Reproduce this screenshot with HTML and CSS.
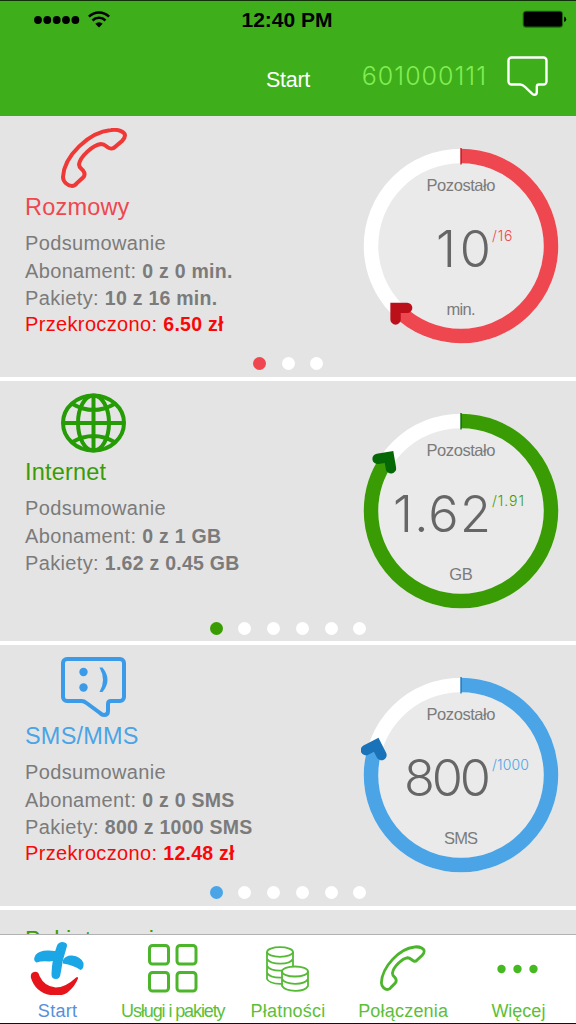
FILE: index.html
```html
<!DOCTYPE html>
<html lang="pl">

<head>
  <meta charset="UTF-8">
  <meta name="viewport" content="width=device-width, initial-scale=1.0">
  <title>Start</title>
  <link rel="stylesheet" href="styles.css">
</head>

<body>
  <header class="header">
    <div class="status-bar">
      <div class="signal">
        <svg width="46" height="8" viewBox="0 0 46 8">
          <circle cx="4" cy="4" r="3.9" /><circle cx="13.3" cy="4" r="3.9" /><circle cx="22.7" cy="4" r="3.9" /><circle cx="32" cy="4" r="3.9" /><circle cx="41.4" cy="4" r="3.9" />
        </svg>
        <svg width="22" height="17" viewBox="0 0 22 17">
          <path d="M0.9 5.6a14.3 14.3 0 0 1 20.2 0M4.5 9.5a9.2 9.2 0 0 1 13 0" fill="none" stroke="#000" stroke-width="2.5" />
          <path d="M11 16.5l-3.7-3.8a5.3 5.3 0 0 1 7.4 0z" />
        </svg>
      </div>
      <div class="clock">12:40 PM</div>
      <div class="battery">
        <svg width="45" height="19" viewBox="0 0 45 19">
          <rect x="0.7" y="0.7" width="40.4" height="17" rx="3.5" fill="#1f6a0c" />
          <rect x="1.8" y="1.8" width="38.2" height="14.8" rx="2" />
          <path d="M42.2 6.5q2 .6 2 2.7t-2 2.7z" />
        </svg>
      </div>
    </div>
    <div class="nav-bar">
      <div class="nav-title">Start</div>
      <div class="nav-right">
        <span class="phone-number">601000111</span>
        <svg width="42" height="42" viewBox="0 0 42 42">
          <path d="M4.5 2.500h32a3 3 0 0 1 3 3v21a3 3 0 0 1-3 3h-4.5q-2.2 0-2.2 2.2v5.3q0 2.8-2.3 2.8-1 0-2.2-1l-7.3-6.900q-2.500-2.400-4.800-2.400h-8.700a3 3 0 0 1-3-3v-21a3 3 0 0 1 3-3z" fill="none" stroke="#fff" stroke-width="2.4" />
        </svg>
      </div>
    </div>
  </header>

  <main class="cards">
    <section class="card red">
      <div class="card-main">
        <div class="info">
          <svg class="card-icon" width="66" height="60" viewBox="0 0 66 60">
            <path d="M50 2C28 4 3 28 2 49c0 5 5 9 9 9 2 0 3.500-1 5-3l6-5.500c2.500-2.500 2-4.500 0-7-2-2-4-3-4-6 1-8 14-19.500 22-20.500 3 0 5 2 7 3.500 2 1.500 5 1.500 7-.500l7-6c2-2 3-3.500 3-5.500C64 4 58 1 50 2z" fill="none" stroke="#f03837" stroke-width="4" />
          </svg>
          <h2>Rozmowy</h2>
          <p class="summary">Podsumowanie</p>
          <p>Abonament: <b>0 z 0 min.</b></p>
          <p>Pakiety: <b>10 z 16 min.</b></p>
          <p class="over">Przekroczono: <b>6.50 zł</b></p>
        </div>
        <svg class="gauge" width="200" height="200" viewBox="0 0 200 200">
          <circle class="track" cx="100" cy="100" r="90" />
          <circle class="value" cx="100" cy="100" r="90" pathLength="100" stroke-dasharray="62.5 100" transform="rotate(-90 100 100)" />
          <path class="tick" d="M100 2v16.500" />
          <path class="arrow" transform="rotate(225 100 100) translate(100 10) rotate(-225)" d="M-7-7h16.800a5.200 5.200 0 0 1 0 10.400h-6.400v6.400a5.200 5.200 0 0 1-10.400 0z" />
          <text class="label" x="100" y="45" textLength="69">Pozostało</text>
          <text class="amount" x="130" y="120.700" textLength="55">10</text>
          <text class="total" x="131" y="95" textLength="20.500">/16</text>
          <text class="label" x="100" y="168.700" textLength="29">min.</text>
        </svg>
      </div>
      <div class="dots"><i class="active"></i><i></i><i></i></div>
    </section>

    <section class="card green">
      <div class="card-main">
        <div class="info">
          <svg class="card-icon" width="66" height="60" viewBox="0 0 66 60">
            <g fill="none" stroke="#259b06" stroke-width="4">
              <ellipse cx="32.500" cy="30" rx="30.500" ry="27.500" />
              <ellipse cx="32.500" cy="30" rx="15.500" ry="27.500" />
              <path d="M32.500 2v56M2 30h61M11.500 11q21 12 42 0M11.500 49q21-12 42 0" />
            </g>
          </svg>
          <h2>Internet</h2>
          <p class="summary">Podsumowanie</p>
          <p>Abonament: <b>0 z 1 GB</b></p>
          <p>Pakiety: <b>1.62 z 0.45 GB</b></p>
        </div>
        <svg class="gauge" width="200" height="200" viewBox="0 0 200 200">
          <circle class="track" cx="100" cy="100" r="90" />
          <circle class="value" cx="100" cy="100" r="90" pathLength="100" stroke-dasharray="84.800 100" transform="rotate(-90 100 100)" />
          <path class="tick" d="M100 2v16.500" />
          <path class="arrow" transform="rotate(305.300 100 100) translate(100 10) rotate(-225)" d="M-7-7h16.800a5.200 5.200 0 0 1 0 10.400h-6.400v6.400a5.200 5.200 0 0 1-10.400 0z" />
          <text class="label" x="100" y="45" textLength="69">Pozostało</text>
          <text class="amount" x="130" y="120.700" textLength="98">1.62</text>
          <text class="total" x="131" y="95" textLength="32">/1.91</text>
          <text class="label" x="100" y="168.700" textLength="23.500">GB</text>
        </svg>
      </div>
      <div class="dots"><i class="active"></i><i></i><i></i><i></i><i></i><i></i></div>
    </section>

    <section class="card blue">
      <div class="card-main">
        <div class="info">
          <svg class="card-icon" width="66" height="60" viewBox="0 0 66 60">
            <path d="M6 2h53a4 4 0 0 1 4 4v34a4 4 0 0 1-4 4h-9q-3 0-3 3v7q0 4-4 4-2 0-4-2L25.500 46q-2.500-2-5-2H6a4 4 0 0 1-4-4V6a4 4 0 0 1 4-4z" fill="none" stroke="#3b9be8" stroke-width="4" />
            <circle cx="22.500" cy="15" r="4.200" fill="#3b9be8" />
            <circle cx="22.500" cy="30.500" r="4.200" fill="#3b9be8" />
            <path d="M38.500 10.500h3q10 12.500 0 24.500h-3q7-12 0-24.500z" fill="#3b9be8" />
          </svg>
          <h2>SMS/MMS</h2>
          <p class="summary">Podsumowanie</p>
          <p>Abonament: <b>0 z 0 SMS</b></p>
          <p>Pakiety: <b>800 z 1000 SMS</b></p>
          <p class="over">Przekroczono: <b>12.48 zł</b></p>
        </div>
        <svg class="gauge" width="200" height="200" viewBox="0 0 200 200">
          <circle class="track" cx="100" cy="100" r="90" />
          <circle class="value" cx="100" cy="100" r="90" pathLength="100" stroke-dasharray="80 100" transform="rotate(-90 100 100)" />
          <path class="tick" d="M100 2v16.500" />
          <path class="arrow" transform="rotate(288 100 100) translate(100 10) rotate(-225)" d="M-7-7h16.800a5.200 5.200 0 0 1 0 10.400h-6.400v6.400a5.200 5.200 0 0 1-10.400 0z" />
          <text class="label" x="100" y="45" textLength="69">Pozostało</text>
          <text class="amount" x="130" y="120.700" textLength="87">800</text>
          <text class="total" x="131" y="95" textLength="37">/1000</text>
          <text class="label" x="100" y="168.700" textLength="34">SMS</text>
        </svg>
      </div>
      <div class="dots"><i class="active"></i><i></i><i></i><i></i><i></i><i></i></div>
    </section>

    <section class="card next">
      <h2>Pakiety cenie</h2>
    </section>
  </main>

  <nav class="tab-bar">
    <a class="tab current">
      <svg width="60" height="60" viewBox="0 0 60 60">
        <path d="M29 10.500Q30.500 7 34.500 7q5 .500 4.500 4-4.500 13-6.500 28-.500 5-4.500 5-4.500 0-4.500-4.500 0-14 5.500-29z" fill="#1ba7e5" />
        <path d="M7.500 20q4-5 13.500-4.500l11 1-1.500 8.500-9 1.500q-7-1-13 1-4-2-1-7.500z" fill="#1ba7e5" />
        <path d="M35 25q3-5 9-4.500 9 1 11.500 7.500.500 6-3 7-7-5-17.500-6.500z" fill="#1ba7e5" />
        <path d="M3.500 38.500q2-2.500 5.500-1.500 2 1 2.500 4 5 10.500 16 11.500 10 0 20-9.500 2.500-2 2.500.500-3 8-10.500 14-4.500 3.500-13.500 3Q8 59 3 43q-.500-3 .500-4.500z" fill="#e5151b" />
      </svg>
      <span>Start</span>
    </a>
    <a class="tab packages">
      <svg width="60" height="60" viewBox="0 0 60 60">
        <g fill="none" stroke="#4cb52c" stroke-width="3">
          <rect x="6.500" y="10.500" width="19" height="18.500" rx="3" />
          <rect x="34" y="10.500" width="19" height="18.500" rx="3" />
          <rect x="6.500" y="37.500" width="19" height="18.500" rx="3" />
          <rect x="34" y="37.500" width="19" height="18.500" rx="3" />
        </g>
      </svg>
      <span>Usługi i pakiety</span>
    </a>
    <a class="tab payments">
      <svg width="60" height="60" viewBox="-1 -1 60 60">
        <g transform="translate(-2 0)" fill="none" stroke="#55b936" stroke-width="1.800">
          <ellipse cx="23" cy="16" rx="13" ry="4.800" />
          <path d="M10 16v27q2 4.500 13 4.800h3M36 16v14.500M10 23q3 4.500 13 4.700T36 23M10 30q3 4.500 13 4.700h3M10 37q3 4.500 13 4.700h2.500" />
          <ellipse cx="38" cy="35.500" rx="13" ry="5" />
          <path d="M25 35.500V50q3 4.500 13 4.800T51 50V35.500M25 43q3 4.700 13 4.800T51 43" />
        </g>
      </svg>
      <span>Płatności</span>
    </a>
    <a class="tab calls">
      <svg width="60" height="60" viewBox="0 0 60 60">
        <path transform="translate(7 10.500) scale(.69 .76)" d="M50 2C28 4 3 28 2 49c0 5 5 9 9 9 2 0 3.500-1 5-3l6-5.500c2.500-2.500 2-4.500 0-7-2-2-4-3-4-6 1-8 14-19.500 22-20.500 3 0 5 2 7 3.500 2 1.500 5 1.500 7-.500l7-6c2-2 3-3.500 3-5.500C64 4 58 1 50 2z" fill="none" stroke="#4cb52c" stroke-width="4" />
      </svg>
      <span>Połączenia</span>
    </a>
    <a class="tab more">
      <svg width="60" height="60" viewBox="0 0 60 60">
        <g fill="#45ba20">
          <circle cx="13.500" cy="34" r="4.200" /><circle cx="29.500" cy="34" r="4.200" /><circle cx="45.500" cy="34" r="4.200" />
        </g>
      </svg>
      <span>Więcej</span>
    </a>
  </nav>
</body>

</html>
```
FILE: styles.css
```css
* {
  box-sizing: border-box;
}

body,
html {
  margin: 0;
  padding: 0;
  width: 576px;
  height: 1024px;
  overflow: hidden;
}

body {
  display: flex;
  flex-direction: column;
  background-color: #e4e4e4;
  font-family: "Liberation Sans", Arial, sans-serif;
}

svg {
  display: block;
}

.header {
  flex: none;
  height: 116px;
  border-top: 1px solid #10300a;
  background-color: #3eae1b;
}

.status-bar {
  display: grid;
  grid-template-columns: 1fr auto 1fr;
  align-items: center;
  height: 37px;
  padding: 0 9px 0 34px;
}

.signal {
  display: flex;
  align-items: center;
  gap: 8px;
}

.clock {
  padding-right: 27px;
  font-size: 21px;
  font-weight: bold;
}

.battery {
  justify-self: end;
}

.nav-bar {
  display: grid;
  grid-template-columns: 1fr auto 1fr;
  height: 78px;
  padding: 0 27px;
}

.nav-title {
  grid-column: 2;
  padding-top: 28px;
  color: #fff;
  font-size: 21.5px;
  letter-spacing: -0.3px;
  line-height: 28px;
}

.nav-right {
  display: flex;
  justify-content: flex-end;
  gap: 20px;
  padding-top: 17px;
}

.phone-number {
  padding-top: 7px;
  color: #83ee52;
  font-family: Inter, sans-serif;
  font-size: 25px;
  font-weight: 300;
  letter-spacing: 1px;
  line-height: 28px;
}

.cards {
  flex: none;
  height: 818px;
  overflow: hidden;
}

.card {
  height: 264.5px;
  border-bottom: 4px solid #fff;
  background-color: #e4e4e4;
}

.red {
  --color: #ef4750;
  --dark: #bb1019;
}

.green {
  --color: #3a9c04;
  --dark: #046804;
}

.blue {
  --color: #4aa4e6;
  --dark: #1a72b8;
}

.card-main {
  display: flex;
  justify-content: space-between;
  height: 241px;
  padding: 12px 15.5px 0 25px;
}

.card-icon {
  margin-left: 36px;
}

h2 {
  margin: 4px 0 0;
  color: var(--color);
  font-size: 23.5px;
  font-weight: normal;
  letter-spacing: 0.2px;
  line-height: 30px;
}

p {
  margin: 0;
  color: #7b7b7b;
  font-size: 20px;
  letter-spacing: 0.35px;
  line-height: 27px;
}

p b {
  font-size: 19.5px;
  letter-spacing: 0.25px;
}

.summary {
  margin: 7px 0 1px;
  line-height: 28px;
}

.over {
  color: #f80808;
  line-height: 24px;
}

.gauge {
  margin-top: 18px;
}

.track {
  fill: #eaeaea;
  stroke: #fff;
  stroke-width: 14.5px;
}

.value {
  fill: none;
  stroke: var(--color);
  stroke-width: 14.5px;
}

.tick {
  stroke: var(--dark);
  stroke-width: 1.3px;
}

.arrow {
  fill: var(--dark);
}

.label {
  fill: #7b7b7b;
  font-size: 16.5px;
  text-anchor: middle;
}

.amount {
  fill: #666;
  font-family: Inter, sans-serif;
  font-size: 50.5px;
  font-weight: 300;
  text-anchor: end;
}

.total {
  fill: var(--color);
  font-family: Inter, sans-serif;
  font-size: 14px;
  font-weight: 300;
}

.dots {
  display: flex;
  justify-content: center;
  gap: 15.8px;
}

.dots i {
  width: 13px;
  height: 13px;
  border-radius: 50%;
  background-color: #fff;
}

.dots .active {
  background-color: var(--color);
}

.next {
  --color: #3a9c04;
  padding: 11px 25px;
}

.tab-bar {
  flex: none;
  display: grid;
  grid-template-columns: repeat(5, 1fr);
  height: 90px;
  border-top: 1px solid #b2b2b2;
  border-bottom: 1px solid #111;
  background-color: #fff;
}

.tab {
  display: flex;
  flex-direction: column;
  align-items: center;
  color: #5cbf38;
  font-size: 18px;
  line-height: 20px;
  white-space: nowrap;
}

.tab span {
  margin-top: 6px;
}

.current {
  color: #5590dd;
  letter-spacing: 0.3px;
}

.packages {
  letter-spacing: -1.1px;
}

.calls,
.payments {
  letter-spacing: 0.2px;
}
```
